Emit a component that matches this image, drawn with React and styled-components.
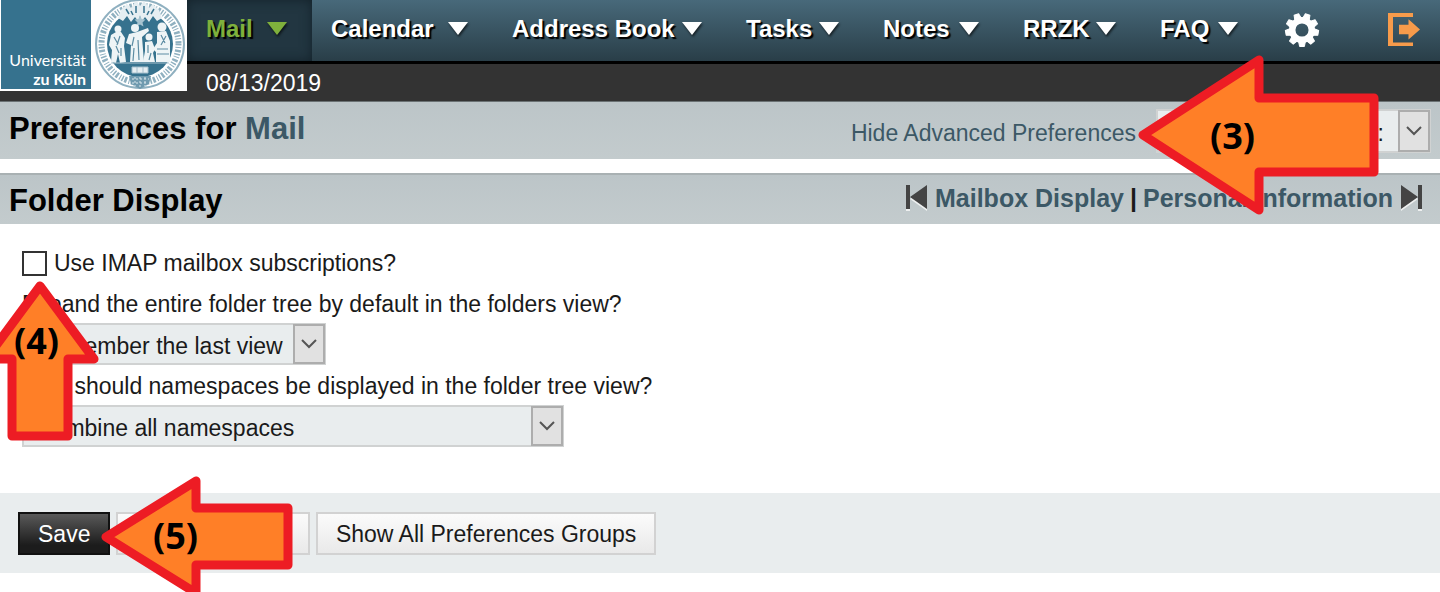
import React, { useState } from "react";
import styled, { createGlobalStyle } from "styled-components";

const GlobalStyle = createGlobalStyle`
  *, *::before, *::after {
    box-sizing: border-box;
  }

  body {
    margin: 0;
    background: #fff;
    color: #1a1a1a;
    font-family: "Liberation Sans", Arial, sans-serif;
    font-size: 23px;
    line-height: 28px;
  }

  a {
    color: #3c5866;
    text-decoration: none;
  }

  button, select, input {
    font: inherit;
    margin: 0;
  }
`;

const Page = styled.div`
  position: relative;
  min-height: 100vh;
  overflow: hidden;
`;

/* ---------- header ---------- */

const Header = styled.header`
  display: flex;
  align-items: flex-start;
  background: #333;
  border-bottom: 1px solid #6b7274;
`;

const Logo = styled.a`
  display: flex;
  flex: none;
  width: 187px;
  height: 91px;
  padding: 0 0 2px 1px;
  background: #fff;
`;

const LogoName = styled.span`
  display: flex;
  flex-direction: column;
  justify-content: flex-end;
  width: 90px;
  padding: 0 5px 1px 0;
  background: #36728e;
  color: #fff;
  font-family: Lato, sans-serif;
  font-size: 16px;
  line-height: 19px;
  text-align: right;
`;

const Bars = styled.div`
  flex: 1;
`;

const Nav = styled.nav`
  display: flex;
  height: 64px;
  border-bottom: 3px solid #000;
  background: linear-gradient(#48697a, #293e48);
`;

const NavItem = styled.a`
  display: flex;
  justify-content: space-between;
  align-items: center;
  width: ${(props) => props.$width}px;
  padding: 0 25px 4px 19px;
  color: ${(props) => (props.$active ? "#7fb03c" : "#fff")};
  background: ${(props) => (props.$active ? "#223641" : "none")};
  box-shadow: ${(props) =>
    props.$active ? "inset 0 0 12px #14222a" : "none"};
  font-size: 24px;
  font-weight: bold;
  white-space: nowrap;
  text-shadow: 2px 2px 1px #000;

  svg {
    flex: none;
    filter: drop-shadow(1px 2px 1px rgba(0, 0, 0, 0.6));
  }
`;

const NavTools = styled.div`
  display: flex;
  flex: 1;
  justify-content: space-between;
  align-items: center;
  padding: 0 19px 2px 21px;
`;

const IconButton = styled.button`
  display: flex;
  padding: 0;
  border: 0;
  background: none;
  cursor: pointer;
`;

const DateBar = styled.div`
  height: 37px;
  padding: 5px 19px;
  color: #fff;
`;

/* ---------- title bars ---------- */

const TitleBar = styled.div`
  display: flex;
  justify-content: space-between;
  align-items: flex-start;
  padding: ${(props) => (props.$section ? "6px 18px 3px 9px" : "7px 9px 6px")};
  border-top: ${(props) => (props.$section ? "2px solid #a9b1b3" : "0")};
  margin-bottom: ${(props) => (props.$section ? "0" : "14px")};
  background: linear-gradient(#bcc5c8, #c3cbcd);
`;

const Title = styled.h1`
  margin: 0;
  color: #000;
  font-size: 31px;
  line-height: 40px;
`;

const TitleTools = styled.div`
  display: flex;
  align-items: center;
  gap: 20px;

  a {
    padding-top: 4px;
  }
`;

const Pager = styled.div`
  display: flex;
  align-items: center;
  gap: 6px;
  padding-top: 3px;
  font-size: 25px;
  font-weight: bold;

  a {
    display: flex;
    align-items: center;
    gap: 8px;
  }
`;

/* ---------- form ---------- */

const Form = styled.form`
  margin: 0;
`;

const Fields = styled.div`
  display: flex;
  flex-direction: column;
  align-items: flex-start;
  padding: 25px 22px 46px;
`;

const CheckRow = styled.label`
  display: flex;
  align-items: center;
  gap: 7px;
  margin-bottom: 13px;
`;

const Checkbox = styled.input`
  appearance: none;
  width: 25px;
  height: 25px;
  border: 2px solid #333;
  background: #fff;

  &:checked {
    background: #3c5866;
  }
`;

const FieldLabel = styled.label`
  margin-bottom: 5px;
`;

const SelectBox = styled.div`
  display: grid;
  width: ${(props) => props.$width}px;
  height: ${(props) => props.$height || 42}px;
  margin-bottom: ${(props) => props.$gap || 0}px;

  select {
    grid-area: 1 / 1;
    appearance: none;
    width: 100%;
    padding: 3px ${(props) => (props.$alignEnd ? 45 : 36)}px 0 12px;
    border: 2px solid #d0d2d2;
    border-radius: 0;
    background: #e9edee;
    color: #1a1a1a;
    text-align-last: ${(props) => (props.$alignEnd ? "right" : "left")};
  }
`;

const SelectArrow = styled.span`
  grid-area: 1 / 1;
  justify-self: end;
  display: flex;
  align-items: center;
  justify-content: center;
  width: 32px;
  margin: 1px;
  border: 2px solid #adadad;
  background: #e1e1e1;
  pointer-events: none;
`;

const Actions = styled.div`
  display: flex;
  gap: 6px;
  padding: 19px 18px 18px;
  background: #e9edee;
`;

const Button = styled.button`
  height: 43px;
  padding: 0 18px;
  border: 2px solid ${(props) => (props.$primary ? "#111" : "#d2d2d2")};
  background: ${(props) =>
    props.$primary
      ? "linear-gradient(#595959, #1c1c1c 80%)"
      : "linear-gradient(#fbfbfb, #e9e9e9)"};
  color: ${(props) => (props.$primary ? "#fff" : "#1a1a1a")};
  cursor: pointer;
`;

/* ---------- callouts over the page ---------- */

const CalloutBox = styled.div`
  position: absolute;
  left: ${(props) => props.$x}px;
  top: ${(props) => props.$y}px;
  display: grid;
  pointer-events: none;

  svg {
    grid-area: 1 / 1;
    overflow: visible;
  }
`;

const CalloutText = styled.span`
  grid-area: 1 / 1;
  z-index: 1;
  padding: ${(props) => props.$pad};
  color: #000;
  font-family: "Open Sans", sans-serif;
  font-size: 36px;
  font-weight: bold;
  line-height: 40px;
`;

const Callout = ({ x, y, width, height, points, pad, children }) => (
  <CalloutBox $x={x} $y={y}>
    <svg width={width} height={height}>
      <polygon
        points={points}
        fill="#ff7f27"
        stroke="#ed1c24"
        strokeWidth="9"
        strokeLinejoin="round"
      />
    </svg>
    <CalloutText $pad={pad}>{children}</CalloutText>
  </CalloutBox>
);

/* ---------- icons ---------- */

const Caret = () => (
  <svg width="20" height="13" viewBox="0 0 20 13">
    <path d="M0 0h20L10 13z" fill="currentColor" />
  </svg>
);

const Chevron = () => (
  <svg width="16" height="10" viewBox="0 0 16 10">
    <path d="M1 1l7 7 7-7" fill="none" stroke="#555" strokeWidth="2" />
  </svg>
);

const Gear = () => (
  <svg width="36" height="36" viewBox="-18 -18 36 36">
    <g fill="#fff" stroke="#fff" strokeLinejoin="round">
      {[20, 60, 100, 140, 180, 220, 260, 300, 340].map((angle) => (
        <path
          key={angle}
          d="M-3.5 -11L-2.4 -16.5H2.4L3.5 -11z"
          transform={`rotate(${angle})`}
        />
      ))}
    </g>
    <circle r="9.8" fill="none" stroke="#fff" strokeWidth="6.5" />
  </svg>
);

const Exit = () => (
  <svg width="33" height="34" viewBox="0 0 33 34">
    <path d="M0 0h25v4H5v25.5h20V33H0z" fill="#f79b4b" />
    <path d="M11 11.7h9.500V6.300L32 16.500 20.500 26.500v-5.200H11z" fill="#f79b4b" />
  </svg>
);

const Step = ({ forward }) => (
  <svg width="21" height="26" viewBox="0 0 21 26">
    <g transform={forward ? "matrix(-1 0 0 1 21 0)" : undefined}>
      <path d="M0 2h4v24H0zM21 2v24L4 14z" fill="#eef0f0" />
      <path d="M0 0h4v24H0zM21 0v24L4 12z" fill="#444" />
    </g>
  </svg>
);

const Seal = () => (
  <svg width="96" height="89" viewBox="0 0 96 89">
    <circle cx="49" cy="44" r="44" fill="#fff" stroke="#8fb0c0" strokeWidth="2" />
    <circle
      cx="49" cy="44" r="38.500" fill="none"
      stroke="#8fb0c0" strokeWidth="6" strokeDasharray="1.500 1.500 1 1.800 2.500 1.400"
    />
    <circle cx="49" cy="44" r="34" fill="#fff" />
    <circle cx="49" cy="44" r="33" fill="#36728e" />
    {/* canopy */}
    <path
      d="M30 10l6-6 4 4 5-7 4 5 4-5 5 7 4-4 6 6 3 8-5 3-4-5-4 6-4-5-3 4-2-5-2 5-3-4-4 5-4-6-4 5-5-3z"
      fill="#e6eef2"
    />
    <path
      d="M35 9l3 5M40 11l2 4M45 6v7M53 6v7M58 11l-2 4M63 9l-3 5"
      stroke="#36728e" strokeWidth="1.500"
    />
    <path d="M49 15l1.500 4 4 .5-3 3 1 4-3.500-2-3.500 2 1-4-3-3 4-.5z" fill="#a6c3d0" />
    {/* figures */}
    <g fill="#eef4f6">
      <circle cx="27" cy="29" r="3.500" />
      <path d="M20 35l5-3h5l4 6-1 8 2 16-6 1-2-9-2 9-5-1 1-12-3-5z" />
      <circle cx="44" cy="28" r="4" />
      <path d="M38 34l8-2 11-4 1 3-7 6 2 25H39l1-17-5-2z" />
      <circle cx="58" cy="37" r="3.500" />
      <path d="M54 42l7-1 3 8-2 4 2 9H52l2-11z" />
      <circle cx="71" cy="27" r="4.500" />
      <path d="M66 32l9-1 4 10v21H65V52l-3-3 4-6z" />
    </g>
    <path
      d="M23 37l4 7M29 36l-3 9M25 46l3 7M30 48v8M43 37l-2 9M47 40l1 20M43 48l-1 13M57 45v8M60 53l-2 7M70 35l4 8M75 36l-5 9M66 49h11M66 54h12"
      fill="none" stroke="#5c8ca3" strokeWidth="1.200"
    />
    {/* base and shield */}
    <path d="M20 63h58M41 67h16v6H41zM46 67v6M52 67v6" fill="#e6eef2" stroke="#a6c0cd" />
    <path d="M38 76h22l-2 8-9 5-9-5z" fill="#6f9aaf" />
    <path d="M41 79h17M41 83h15M44 77v9M49 77v11M54 77v9" stroke="#dce8ed" strokeDasharray="2" />
  </svg>
);

const navItems = [
  { label: "Mail", width: 125, active: true },
  { label: "Calendar", width: 181 },
  { label: "Address Book", width: 234 },
  { label: "Tasks", width: 137 },
  { label: "Notes", width: 140 },
  { label: "RRZK", width: 137 },
  { label: "FAQ", width: 122 },
];

const App = () => {
  const [subscribed, setSubscribed] = useState(false);

  return (
    <Page>
      <GlobalStyle />
      <Header>
        <Logo href="#">
          <LogoName>
            Universität <b>zu Köln</b>
          </LogoName>
          <Seal />
        </Logo>
        <Bars>
          <Nav>
            {navItems.map((item) => (
              <NavItem
                href="#"
                key={item.label}
                $width={item.width}
                $active={item.active}
              >
                {item.label}
                <Caret />
              </NavItem>
            ))}
            <NavTools>
              <IconButton aria-label="Settings">
                <Gear />
              </IconButton>
              <IconButton aria-label="Log out">
                <Exit />
              </IconButton>
            </NavTools>
          </Nav>
          <DateBar>08/13/2019</DateBar>
        </Bars>
      </Header>

      <TitleBar>
        <Title>
          Preferences for <a href="#">Mail</a>
        </Title>
        <TitleTools>
          <a href="#">Hide Advanced Preferences</a>
          <SelectBox $width={275} $height={44} $alignEnd>
            <select aria-label="Preferences application">
              <option>Other Preferences:</option>
            </select>
            <SelectArrow>
              <Chevron />
            </SelectArrow>
          </SelectBox>
        </TitleTools>
      </TitleBar>

      <TitleBar $section>
        <Title as="h2">Folder Display</Title>
        <Pager>
          <a href="#">
            <Step /> Mailbox Display
          </a>
          |
          <a href="#">
            Personal Information <Step forward />
          </a>
        </Pager>
      </TitleBar>

      <Form onSubmit={(e) => e.preventDefault()}>
        <Fields>
          <CheckRow>
            <Checkbox
              type="checkbox"
              checked={subscribed}
              onChange={() => setSubscribed(!subscribed)}
            />
            Use IMAP mailbox subscriptions?
          </CheckRow>
          <FieldLabel htmlFor="expand">
            Expand the entire folder tree by default in the folders view?
          </FieldLabel>
          <SelectBox $width={304} $gap={7}>
            <select id="expand">
              <option>Remember the last view</option>
            </select>
            <SelectArrow>
              <Chevron />
            </SelectArrow>
          </SelectBox>
          <FieldLabel htmlFor="namespaces">
            How should namespaces be displayed in the folder tree view?
          </FieldLabel>
          <SelectBox $width={542}>
            <select id="namespaces">
              <option>Combine all namespaces</option>
            </select>
            <SelectArrow>
              <Chevron />
            </SelectArrow>
          </SelectBox>
        </Fields>
        <Actions>
          <Button type="submit" $primary>
            Save
          </Button>
          <Button type="reset">Undo Changes</Button>
          <Button type="button">Show All Preferences Groups</Button>
        </Actions>
      </Form>

      <Callout
        x={1137} y={54} width={242} height={161}
        points="6,81 122,6 122,44 237,44 237,118 122,118 122,156"
        pad="62px 0 0 73px"
      >
        (3)
      </Callout>
      <Callout
        x={-20} y={280} width={120} height={161}
        points="60,6 114,79 88,79 88,156 32,156 32,79 6,79"
        pad="41px 0 0 34px"
      >
        (4)
      </Callout>
      <Callout
        x={100} y={475} width={194} height={124}
        points="6,62 96,6 96,33 188,33 188,90 96,90 96,118"
        pad="41px 0 0 53px"
      >
        (5)
      </Callout>
    </Page>
  );
};

export default App;
